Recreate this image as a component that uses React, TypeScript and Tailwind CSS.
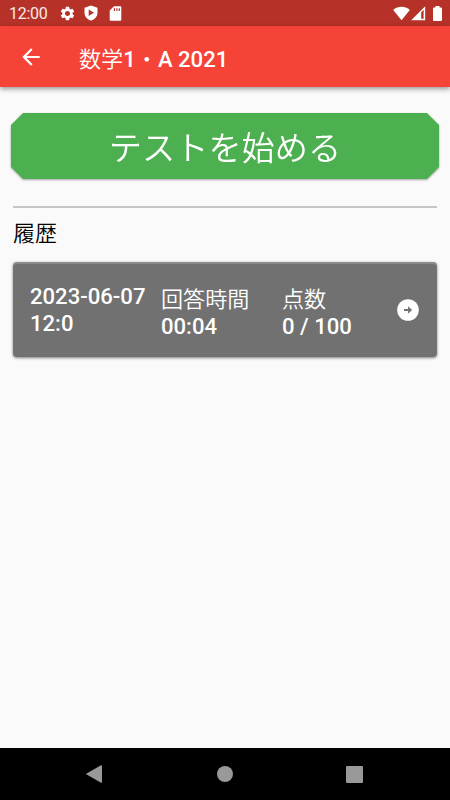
import React from "react";
import { MdSettings, MdArrowBack } from "react-icons/md";

interface HistoryEntry {
  id: string;
  date: string;
  time: string;
  duration: string;
  score: string;
}

const history: HistoryEntry[] = [
  { id: "1", date: "2023-06-07", time: "12:0", duration: "00:04", score: "0 / 100" },
];

const StatusBar: React.FC = () => (
  <div className="flex h-[26px] items-center bg-[#b63127] pl-[9px] pr-[8px] text-white">
    <span className="w-[51px] pt-[2px] text-[16px] leading-[26px] tracking-[-0.3px] text-white/90">12:00</span>
    <MdSettings size={17} className="-ml-px" />
    <svg className="ml-[7px]" width="16" height="16" viewBox="0 0 16 16">
      <path
        fill="currentColor"
        fillRule="evenodd"
        d="M8 .4 14.500 2.800v5c0 3.700-2.700 6.700-6.500 7.900C4.200 14.500 1.500 11.500 1.500 7.800v-5zM5.700 4.500v6.400L11 7.700z"
      />
    </svg>
    <svg className="ml-[10px]" width="13" height="15" viewBox="0 0 13 15">
      <path
        fill="currentColor"
        fillRule="evenodd"
        d="M5 .3h6.300q1 0 1 1v12.400q0 1-1 1H1.700q-1 0-1-1V4.600zM4.800 2.200v2.900H6V2.200zM7.300 2.200v2.900h1.200V2.200zM9.700 2.200v2.900h1.200V2.200z"
      />
    </svg>
    <div className="flex-1" />
    <svg width="17" height="15" viewBox="0 0 17 15">
      <path fill="currentColor" d="M8.500 14.300.2 4C5-.3 12-.3 16.800 4z" />
    </svg>
    <svg className="ml-px" width="15" height="15" viewBox="0 0 15 15">
      <path fill="currentColor" d="M.2 14.200 14.200.2v14z" />
      <path fill="#b63127" d="M10.200 6.200 12.600 3.800v8.900h-2.400z" />
    </svg>
    <svg className="ml-[7px]" width="9" height="15" viewBox="0 0 9 15">
      <path fill="currentColor" d="M2.500 0h4v1.500H8a1 1 0 0 1 1 1V14a1 1 0 0 1-1 1H1a1 1 0 0 1-1-1V2.500a1 1 0 0 1 1-1h1.500z" />
    </svg>
  </div>
);

const AppBar: React.FC = () => (
  <header className="flex h-[61px] items-center bg-[#f54337] pl-[18px] text-white shadow-[0_2px_5px_rgba(0,0,0,0.4)]">
    <MdArrowBack size={26} />
    <h1 className="ml-[35px] pt-[5px] text-[22.1px] font-medium leading-[32px]">
      <span className="font-[350]">数学</span>1<span className="font-[350]">・</span>A 2021
    </h1>
  </header>
);

const StartButton: React.FC = () => (
  <div className="drop-shadow-[0_1px_1px_rgba(0,0,0,0.35)]">
    <button className="block h-[66px] w-full bg-[#4caf50] text-center text-[33.2px] font-[350] leading-[71px] text-white [clip-path:polygon(12px_0,calc(100%-12px)_0,100%_12px,100%_calc(100%-12px),calc(100%-12px)_100%,12px_100%,0_calc(100%-12px),0_12px)]">
      テストを始める
    </button>
  </div>
);

const HistoryCard: React.FC<{ entry: HistoryEntry }> = ({ entry }) => (
  <div className="flex h-[95px] rounded-[4px] bg-[#717171] pl-[17px] text-[22.1px] font-medium leading-[26.500px] text-white shadow-[0_1px_3px_rgba(0,0,0,0.5),inset_0_2px_1px_rgba(255,255,255,0.2)]">
    <div className="w-[131px] pt-[21px]">
      <div>{entry.date}</div>
      <div>{entry.time}</div>
    </div>
    <div className="w-[121px] pt-[24px]">
      <div className="font-[350]">回答時間</div>
      <div>{entry.duration}</div>
    </div>
    <div className="w-[115px] pt-[24px]">
      <div className="font-[350]">点数</div>
      <div>{entry.score}</div>
    </div>
    <svg className="mt-[37px]" width="22" height="22" viewBox="0 0 22 22">
      <circle cx="11" cy="11" r="10.800" fill="#fff" />
      <path d="M7 10.100h4.100V7.200l4 3.800-4 3.800v-2.900H7z" fill="#717171" />
    </svg>
  </div>
);

const NavigationBar: React.FC = () => (
  <nav className="flex h-[52px] items-center justify-between bg-black pl-[85px] pr-[87px] text-[#999]">
    <svg width="18" height="20" viewBox="0 0 18 20">
      <path fill="currentColor" d="M.8 10 16 1.300q1-.5 1 .5v16.400q0 1-1 .5z" />
    </svg>
    <div className="h-4 w-4 rounded-full bg-[#999]" />
    <div className="h-[17px] w-[17px] rounded-[1px] bg-[#999]" />
  </nav>
);

const App: React.FC = () => {
  return (
    <div className="flex h-[800px] w-[450px] flex-col overflow-hidden bg-[#fafafa] font-['Roboto','Noto_Sans_CJK_JP',sans-serif]">
      <StatusBar />
      <AppBar />
      <main className="flex-1 px-[11px] pt-[26px]">
        <StartButton />
        <div className="px-[2px]">
          <hr className="mt-[27px] border-t-2 border-[#c6c6c6]" />
          <h2 className="mt-[10px] h-[32px] text-[22px] font-[350] leading-[32px] text-black">履歴</h2>
          <div className="mt-[12px] flex flex-col gap-2">
            {history.map((entry) => (
              <HistoryCard key={entry.id} entry={entry} />
            ))}
          </div>
        </div>
      </main>
      <NavigationBar />
    </div>
  );
};

export default App;
